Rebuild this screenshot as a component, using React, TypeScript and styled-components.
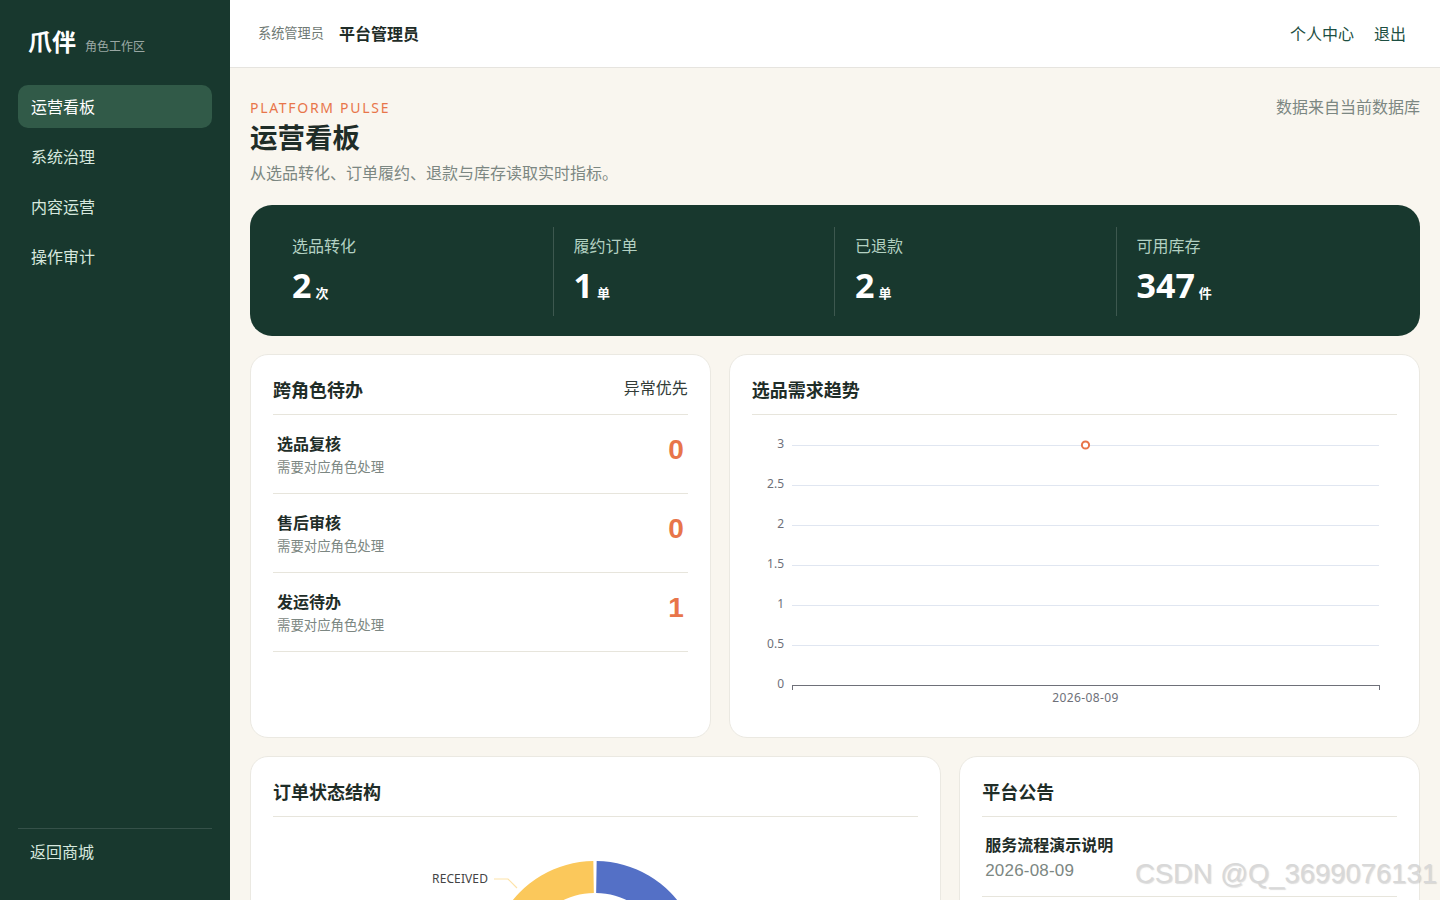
import React from 'react';
import styled, { createGlobalStyle } from 'styled-components';

const CJK = `"Noto Sans CJK SC", "Noto Sans", sans-serif`;

const Global = createGlobalStyle`
  html, body { margin: 0; padding: 0; height: 100%; overflow: hidden; background: #f9f6ef; }
  body { font-family: "Noto Sans", ${CJK}; color: #1f2d28; }
  * { box-sizing: border-box; }
`;

const Shell = styled.div`display: flex; height: 900px; overflow: hidden; position: relative;`;
const Sidebar = styled.aside`
  width: 230px; flex: none; background: #18382e; display: flex; flex-direction: column;
  padding: 0 18px;
`;
const Brand = styled.div`display: flex; align-items: baseline; gap: 9px; padding: 24px 0 0 10px; height: 85px;`;
const BrandName = styled.span`font-size: 24px; line-height: 36px; font-weight: 700; color: #fff;`;
const BrandSub = styled.span`font-size: 12px; color: rgba(255,255,255,.58);`;
const Nav = styled.nav`display: flex; flex-direction: column; gap: 7px; flex: 1;`;
const NavItem = styled.a<{ $active?: boolean }>`
  height: 43px; display: flex; align-items: center; padding: 0 13px 2px; border-radius: 10px;
  font-size: 16px; color: ${p => (p.$active ? '#fff' : '#d7e8df')};
  background: ${p => (p.$active ? '#315a48' : 'transparent')};
`;
const SideFoot = styled.div`
  border-top: 1px solid rgba(255,255,255,.13); height: 72px; padding: 12px 12px 0;
  font-size: 16px; line-height: 22px; color: #d7e8df;
`;

const Main = styled.main`flex: 1; min-width: 0; display: flex; flex-direction: column;`;
const Topbar = styled.header`
  height: 68px; flex: none; background: #fff; border-bottom: 1px solid #e6e4df;
  display: flex; align-items: center; justify-content: space-between; padding: 0 34px 2px 28px;
`;
const TopLeft = styled.div`display: flex; align-items: center; gap: 15px;`;
const Role = styled.span`font-size: 13.2px; color: #6f7a75;`;
const Who = styled.span`font-size: 16px; font-weight: 600; color: #1f2d28;`;
const TopRight = styled.div`display: flex; gap: 20px;`;
const TopLink = styled.a`font-size: 16px; color: #1d4f42;`;

const Content = styled.div`padding: 30px 20px 0; display: flex; flex-direction: column; gap: 18px;`;
const Head = styled.div`display: flex; justify-content: space-between; align-items: flex-start; margin-bottom: 2px;`;
const Eyebrow = styled.div`font-size: 14px; line-height: 20px; letter-spacing: 1.7px; color: #e8754a; font-family: "Noto Sans", sans-serif;`;
const PageTitle = styled.h1`margin: 1px 0 0; font-size: 27.5px; line-height: 38px; font-weight: 700; color: #1f2d28;`;
const PageSub = styled.p`margin: 4px 0 0; font-size: 16px; line-height: 24px; color: #7c8782;`;
const HeadNote = styled.div`font-size: 16px; line-height: 18px; color: #7c8782;`;

const Band = styled.section`
  height: 131px; background: #18382e; border-radius: 22px; padding: 22px;
  display: grid; grid-template-columns: repeat(4, 1fr);
`;
const Stat = styled.div<{ $last?: boolean }>`
  padding: 6px 20px 0;
  border-right: ${p => (p.$last ? 'none' : '1px solid rgba(255,255,255,.16)')};
`;
const StatLabel = styled.div`font-size: 16px; line-height: 26px; color: #b3d1c2;`;
const StatValue = styled.div`margin-top: 3px; font-size: 34px; line-height: 46px; font-weight: 700; color: #fff; display: flex; align-items: baseline; gap: 4px;`;
const StatUnit = styled.span`font-size: 13px; font-weight: 700; color: #fff;`;

const Row = styled.div<{ $cols: string }>`display: grid; grid-template-columns: ${p => p.$cols}; gap: 18px;`;
const Card = styled.section<{ $h?: number }>`
  min-width: 0; background: #fff; border: 1px solid #ebe9e2; border-radius: 18px; padding: 0 22px;
  height: ${p => (p.$h ? `${p.$h}px` : 'auto')};
`;
const CardHead = styled.div`
  height: 60px; display: flex; align-items: center; justify-content: space-between;
  border-bottom: 1px solid #e7e5dc;
`;
const CardTitle = styled.h2`margin: 8px 0 0; font-size: 18px; font-weight: 700; color: #1f2d28;`;
const CardNote = styled.span`margin-top: 4px; font-size: 16px; color: #333c38;`;

const Todo = styled.div`
  height: 79px; display: flex; align-items: center; justify-content: space-between;
  padding: 0 4px; border-bottom: 1px solid #e7e5dc;
`;
const TodoTitle = styled.div`font-size: 16px; line-height: 24px; font-weight: 600; color: #1f2d28;`;
const TodoSub = styled.div`margin-top: 1px; font-size: 13.4px; line-height: 20px; color: #7c8782;`;
const TodoCount = styled.div`margin-top: -8px; font-family: "Liberation Sans", sans-serif; font-size: 28px; font-weight: 700; color: #e8754a;`;

const Notice = styled.div`height: 80px; padding: 15px 3px 0; border-bottom: 1px solid #e7e5dc;`;
const NoticeTitle = styled.div`font-size: 16px; line-height: 26px; font-weight: 600; color: #1f2d28;`;
const NoticeDate = styled.div`font-family: "Liberation Sans", sans-serif; font-size: 17px; line-height: 26px; letter-spacing: .2px; color: #7c8782;`;

const Svg = styled.svg`display: block;`;
const Watermark = styled.div`
  position: absolute; left: 1135px; top: 857px; font-family: "Liberation Sans", sans-serif;
  font-size: 27.4px; line-height: 34px; white-space: nowrap; color: #d8d8d8;
  text-shadow: 1px 1px 1px rgba(120,120,120,.25);
`;

const ticks = ['3', '2.5', '2', '1.5', '1', '0.5', '0'];

function TrendChart() {
  return (
    <Svg width={645} height={322} viewBox="0 0 645 322">
      {ticks.map((t, i) => {
        const y = 30.5 + i * 40;
        return (
          <g key={t}>
            <text x={32} y={y + 2} textAnchor="end" fontSize={12} fill="#6e7079" fontFamily='"Noto Sans", sans-serif'>{t}</text>
            <line x1={40} x2={627} y1={y} y2={y} stroke={i === 6 ? '#6e7079' : '#e0e6f1'} strokeWidth={1} />
          </g>
        );
      })}
      <line x1={40.5} x2={40.5} y1={270} y2={275} stroke="#6e7079" />
      <line x1={627.5} x2={627.5} y1={270} y2={275} stroke="#6e7079" />
      <text x={333.5} y={287} textAnchor="middle" fontSize={12} fill="#6e7079" fontFamily='"Noto Sans", sans-serif' letterSpacing={0.4}>2026-08-09</text>
      <circle cx={333.5} cy={30} r={3.6} fill="#fff" stroke="#e8754a" strokeWidth={2} />
    </Svg>
  );
}

function arc(cx: number, cy: number, r0: number, r1: number, a0: number, a1: number) {
  const pt = (r: number, a: number) => {
    const t = ((a - 90) * Math.PI) / 180;
    return `${cx + r * Math.cos(t)} ${cy + r * Math.sin(t)}`;
  };
  const large = a1 - a0 > 180 ? 1 : 0;
  return `M${pt(r1, a0)} A${r1} ${r1} 0 ${large} 1 ${pt(r1, a1)} L${pt(r0, a1)} A${r0} ${r0} 0 ${large} 0 ${pt(r0, a0)} Z`;
}

function Donut() {
  const cx = 322;
  const cy = 150;
  return (
    <Svg width={645} height={258} viewBox="0 0 645 258">
      <path d={arc(cx, cy, 74, 106, 0.9, 120)} fill="#5470c6" />
      <path d={arc(cx, cy, 74, 106, 240, 359.1)} fill="#fbc85b" />
      <text x={215} y={66} textAnchor="end" fontSize={12} fill="#444" fontFamily='"Noto Sans", sans-serif' letterSpacing={0.1}>RECEIVED</text>
      <path d="M221 62 H235 L244 71" fill="none" stroke="#fde3a9" strokeWidth={1.2} />
    </Svg>
  );
}

const stats = [
  { label: '选品转化', value: '2', unit: '次' },
  { label: '履约订单', value: '1', unit: '单' },
  { label: '已退款', value: '2', unit: '单' },
  { label: '可用库存', value: '347', unit: '件' },
];
const todos = [
  { title: '选品复核', count: 0 },
  { title: '售后审核', count: 0 },
  { title: '发运待办', count: 1 },
];
const nav = ['运营看板', '系统治理', '内容运营', '操作审计'];

export default function App() {
  return (
    <Shell>
      <Global />
      <Sidebar>
        <Brand>
          <BrandName>爪伴</BrandName>
          <BrandSub>角色工作区</BrandSub>
        </Brand>
        <Nav>
          {nav.map((n, i) => <NavItem key={n} $active={i === 0}>{n}</NavItem>)}
        </Nav>
        <SideFoot>返回商城</SideFoot>
      </Sidebar>
      <Main>
        <Topbar>
          <TopLeft>
            <Role>系统管理员</Role>
            <Who>平台管理员</Who>
          </TopLeft>
          <TopRight>
            <TopLink>个人中心</TopLink>
            <TopLink>退出</TopLink>
          </TopRight>
        </Topbar>
        <Content>
          <Head>
            <div>
              <Eyebrow>PLATFORM PULSE</Eyebrow>
              <PageTitle>运营看板</PageTitle>
              <PageSub>从选品转化、订单履约、退款与库存读取实时指标。</PageSub>
            </div>
            <HeadNote>数据来自当前数据库</HeadNote>
          </Head>
          <Band>
            {stats.map((s, i) => (
              <Stat key={s.label} $last={i === stats.length - 1}>
                <StatLabel>{s.label}</StatLabel>
                <StatValue>{s.value}<StatUnit>{s.unit}</StatUnit></StatValue>
              </Stat>
            ))}
          </Band>
          <Row $cols="2fr 3fr">
            <Card $h={384}>
              <CardHead>
                <CardTitle>跨角色待办</CardTitle>
                <CardNote>异常优先</CardNote>
              </CardHead>
              {todos.map(t => (
                <Todo key={t.title}>
                  <div>
                    <TodoTitle>{t.title}</TodoTitle>
                    <TodoSub>需要对应角色处理</TodoSub>
                  </div>
                  <TodoCount>{t.count}</TodoCount>
                </Todo>
              ))}
            </Card>
            <Card $h={384}>
              <CardHead><CardTitle>选品需求趋势</CardTitle></CardHead>
              <TrendChart />
            </Card>
          </Row>
          <Row $cols="3fr 2fr">
            <Card $h={320}>
              <CardHead><CardTitle>订单状态结构</CardTitle></CardHead>
              <Donut />
            </Card>
            <Card $h={320}>
              <CardHead><CardTitle>平台公告</CardTitle></CardHead>
              <Notice>
                <NoticeTitle>服务流程演示说明</NoticeTitle>
                <NoticeDate>2026-08-09</NoticeDate>
              </Notice>
            </Card>
          </Row>
        </Content>
      </Main>
      <Watermark>CSDN @Q_3699076131</Watermark>
    </Shell>
  );
}
